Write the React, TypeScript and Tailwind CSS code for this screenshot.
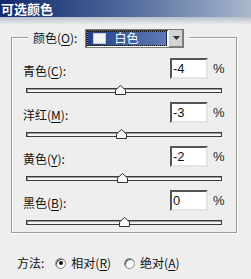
import React from "react"

const font = { fontFamily: '"Noto Sans CJK SC", "Liberation Sans", sans-serif' }

function Label({ text, k }: { text: string; k: string }) {
  return (
    <span className="text-[12px] leading-none text-[#111]">
      {text}(<span className="underline underline-offset-2">{k}</span>):
    </span>
  )
}

function Slider({ value }: { value: number }) {
  const left = 98 + value * 0.98 - 5.5
  return (
    <div className="relative h-[10px] w-[196px] ml-[3px]">
      <div className="absolute left-0 right-0 top-[3px] h-[5px] border border-[#3a3a3a] bg-[#f6f6f6] shadow-[inset_1px_1px_0_#9a9a9a]" />
      <svg className="absolute top-0" style={{ left }} width="11" height="10" viewBox="0 0 11 10">
        <polygon points="0.5,9.5 0.5,5 5.5,0.5 10.5,5 10.5,9.5" fill="#fafafa" stroke="#333" strokeWidth="1" />
      </svg>
    </div>
  )
}

const rows = [
  { text: "青色", k: "C", value: -4 },
  { text: "洋红", k: "M", value: -3 },
  { text: "黄色", k: "Y", value: -2 },
  { text: "黑色", k: "B", value: 0 },
]

function Radio({ checked }: { checked?: boolean }) {
  return (
    <span className="flex h-[11px] w-[11px] items-center justify-center rounded-full border border-[#888] bg-white shadow-[inset_1px_1px_0_#555]">
      {checked && <span className="h-[4px] w-[4px] rounded-full bg-[#111]" />}
    </span>
  )
}

export default function App() {
  return (
    <div className="w-[251px] h-[279px] overflow-hidden bg-[#eeeeee]" style={font}>
      {/* Title bar */}
      <div className="h-[17px] bg-gradient-to-r from-[#10286e] via-[#50689c] to-[#aab8cc] flex items-center pl-[1px]">
        <span className="text-[13px] font-bold leading-none text-white">可选颜色</span>
      </div>
      <div className="h-[8px] bg-gradient-to-b from-[#b8c0cc] to-[#eeeeee]" />

      {/* Group box */}
      <div className="relative ml-[11px] mt-[12px] w-[226px] h-[196px] border border-[#9c9c9c] shadow-[inset_1px_1px_0_#fff,1px_1px_0_#fff]">
        <div className="absolute left-[16px] top-0 flex h-[20px] -translate-y-1/2 items-center bg-[#eeeeee] px-[5px]">
          <Label text="颜色" k="O" />
          <div className="ml-[8px] flex h-[19px] w-[99px] items-stretch border border-[#7a7a7a] bg-white shadow-[inset_1px_1px_0_#404040]">
            <div className="m-[1px] flex flex-1 items-center border border-dotted border-[#111] bg-gradient-to-r from-[#24408a] to-[#5f7bb6] pl-[5px]">
              <span className="h-[11px] w-[13px] bg-[#f2f2f2] border border-[#c8c8c8]" />
              <span className="ml-[8px] text-[12px] leading-none text-white">白色</span>
            </div>
            <div className="flex w-[15px] items-center justify-center bg-[#d4d4d4] border-l border-[#f4f4f4] shadow-[inset_-1px_-1px_0_#808080]">
              <svg width="7" height="4" viewBox="0 0 7 4">
                <polygon points="0,0 7,0 3.5,4" fill="#333" />
              </svg>
            </div>
          </div>
        </div>

        <div className="flex flex-col pt-[20px] pl-[11px]">
          {rows.map((r) => (
            <div key={r.k} className="flex flex-col h-[44px]">
              <div className="flex h-[21px] items-center">
                <div className="w-[147px]">
                  <Label text={r.text} k={r.k} />
                </div>
                <div className="flex h-[21px] w-[38px] items-center border-2 border-[#e4e4e4] border-l-[#555] border-t-[#555] bg-white pl-[1px]">
                  <span className="text-[13px] leading-none text-[#111]" style={{ fontFamily: '"Liberation Sans", sans-serif' }}>
                    {r.value}
                  </span>
                </div>
                <span className="ml-[5px] text-[13px] leading-none text-[#222]" style={{ fontFamily: '"Liberation Sans", sans-serif' }}>
                  %
                </span>
              </div>
              <div className="mt-[6px]">
                <Slider value={r.value} />
              </div>
            </div>
          ))}
        </div>
      </div>

      {/* Method */}
      <div className="mt-[24px] ml-[17px] flex items-center text-[12px] leading-none text-[#111]">
        <span>方法:</span>
        <span className="ml-[11px]">
          <Radio checked />
        </span>
        <span className="ml-[5px]">
          相对(<span className="underline underline-offset-2">R</span>)
        </span>
        <span className="ml-[13px]">
          <Radio />
        </span>
        <span className="ml-[5px]">
          绝对(<span className="underline underline-offset-2">A</span>)
        </span>
      </div>
    </div>
  )
}
